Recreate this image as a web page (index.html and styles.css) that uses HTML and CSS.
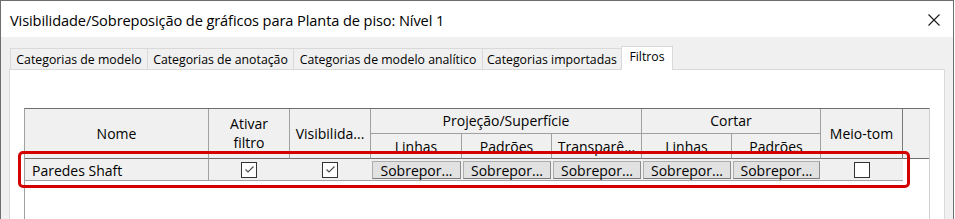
FILE: index.html
```html
<!DOCTYPE html>
<html lang="pt">
<head>
    <meta charset="UTF-8">
    <title>Visibilidade/Sobreposição de gráficos</title>
    <link rel="stylesheet" href="styles.css">
</head>
<body>
    <div class="window">
        <div class="titlebar">
            <span class="title">Visibilidade/Sobreposição de gráficos para Planta de piso: Nível 1</span>
            <svg class="close" width="12" height="12" viewBox="0 0 12 12">
                <path d="M0.5 0.5 L11.5 11.5 M11.5 0.5 L0.5 11.5" stroke="#1a1a1a" stroke-width="1.1" fill="none"/>
            </svg>
        </div>

        <div class="content">
            <div class="tabs">
                <div class="tab t1">Categorias de modelo</div>
                <div class="tab t2">Categorias de anotação</div>
                <div class="tab t3">Categorias de modelo analítico</div>
                <div class="tab t4">Categorias importadas</div>
                <div class="tab t5 active">Filtros</div>
            </div>

            <div class="page">
                <div class="grid">
                    <!-- cabeçalho -->
                    <div class="hd span2">Nome</div>
                    <div class="hd span2 two-line">Ativar<br>filtro</div>
                    <div class="hd span2">Visibilida...</div>
                    <div class="hd group3">Projeção/Superfície</div>
                    <div class="hd group2">Cortar</div>
                    <div class="hd span2 dark-right">Meio-tom</div>
                    <div class="hd span2 filler"></div>
                    <div class="hd sub">Linhas</div>
                    <div class="hd sub">Padrões</div>
                    <div class="hd sub">Transparê...</div>
                    <div class="hd sub">Linhas</div>
                    <div class="hd sub">Padrões</div>

                    <!-- linha do filtro -->
                    <div class="cell name">Paredes Shaft</div>
                    <div class="cell center"><span class="chk"><svg width="13" height="13" viewBox="0 0 13 13"><path d="M2.5 6.5 L5 9 L10.5 3.5" stroke="#4a4a4a" stroke-width="1.1" fill="none"/></svg></span></div>
                    <div class="cell center"><span class="chk"><svg width="13" height="13" viewBox="0 0 13 13"><path d="M2.5 6.5 L5 9 L10.5 3.5" stroke="#4a4a4a" stroke-width="1.1" fill="none"/></svg></span></div>
                    <div class="cell"><button class="btn">Sobrepor...</button></div>
                    <div class="cell"><button class="btn">Sobrepor...</button></div>
                    <div class="cell"><button class="btn">Sobrepor...</button></div>
                    <div class="cell"><button class="btn">Sobrepor...</button></div>
                    <div class="cell"><button class="btn">Sobrepor...</button></div>
                    <div class="cell center"><span class="chk"></span></div>
                    <div class="cell empty"></div>
                </div>
            </div>
        </div>

        <div class="highlight"></div>
    </div>
</body>
</html>
```

FILE: styles.css
```css
body {
    margin: 0;
    background: #fff;
    font-family: "Open Sans", "Noto Sans", "Liberation Sans", sans-serif;
    color: #000;
}
.window {
    position: relative;
    width: 954px;
    height: 219px;
    box-sizing: border-box;
    border: 1px solid #6e6e6e;
    border-bottom: 0;
    background: #f0f0f0;
    overflow: hidden;
}
.titlebar {
    height: 36px;
    background: #fff;
    display: flex;
    align-items: center;
    justify-content: space-between;
    padding-left: 9px;
}
.title {
    font-size: 14.6px;
    letter-spacing: -0.1px;
    margin-top: 1px;
}
.close {
    margin-right: 13px;
    margin-top: 1px;
}
.content {
    padding: 9px 8px 0 8px;
}
.tabs {
    display: flex;
    align-items: flex-end;
    height: 23px;
    padding-left: 1px;
}
.tab {
    box-sizing: border-box;
    height: 21px;
    margin-left: -1px;
    border: 1px solid #d9d9d9;
    border-bottom: 0;
    background: #f0f0f0;
    font-size: 12.3px;
    display: flex;
    align-items: center;
    justify-content: center;
    white-space: nowrap;
}
.tab.t1 { margin-left: 0; width: 138px; }
.tab.t2 { width: 147px; }
.tab.t3 { width: 190px; }
.tab.t4 { width: 140px; }
.tab.t5 { width: 52px; }
.tab.active {
    height: 24px;
    margin-bottom: -1px;
    background: #fff;
    position: relative;
    z-index: 1;
    padding-bottom: 4px;
}
.page {
    background: #fff;
    border: 1px solid #d9d9d9;
    height: 160px;
    padding: 38px 0 0 14px;
}
.grid {
    display: grid;
    grid-template-columns: 184px 81px 81px 91px 90px 90px 90px 89px 82px 26px;
    grid-template-rows: 25px 25px 22px;
    width: 906px;
    height: 130px;
    box-sizing: border-box;
    align-content: start;
    border-top: 1px solid #6e6e6e;
    border-left: 1px solid #a0a0a0;
    border-right: 1px solid #d0d0d0;
}
.hd {
    box-sizing: border-box;
    background: #f0f0f0;
    border-right: 1px solid #a0a0a0;
    border-bottom: 1px solid #a0a0a0;
    display: flex;
    align-items: center;
    justify-content: center;
    text-align: center;
    font-size: 14px;
    line-height: 19px;
    white-space: nowrap;
    overflow: hidden;
}
.hd.span2 {
    grid-row: span 2;
    border-bottom-color: #6e6e6e;
}
.hd.two-line {
    padding-bottom: 2px;
}
.hd.group3 {
    grid-column: span 3;
    padding-bottom: 2px;
}
.hd.group2 {
    grid-column: span 2;
    padding-bottom: 2px;
}
.hd.sub {
    border-bottom-color: #6e6e6e;
    align-items: flex-start;
    padding-top: 3px;
}
.hd.dark-right {
    border-right-color: #7a7a7a;
}
.hd.filler {
    border-right: 0;
}
.cell {
    box-sizing: border-box;
    background: #f0f0f0;
    border-bottom: 1px solid #a0a0a0;
    display: flex;
    align-items: stretch;
    font-size: 14px;
}
.cell.name {
    align-items: center;
    padding-left: 7px;
    padding-top: 2px;
    border-right: 1px solid #a0a0a0;
}
.cell.center {
    align-items: center;
    justify-content: center;
}
.cell.empty {
    background: #fff;
    border-bottom: 0;
}
.btn {
    flex: 1;
    margin: 2px 1px 1px 1px;
    padding: 0;
    box-sizing: border-box;
    border: 1px solid #adadad;
    border-bottom-color: #7a7a7a;
    border-right-color: #8c8c8c;
    background: #e1e1e1;
    font-family: inherit;
    font-size: 14px;
    line-height: 15px;
    color: #000;
    white-space: nowrap;
}
.chk {
    box-sizing: border-box;
    width: 16px;
    height: 16px;
    border: 1px solid #333;
    background: #fff;
    display: flex;
    align-items: center;
    justify-content: center;
    margin-right: 1px;
}
.highlight {
    position: absolute;
    left: 17px;
    top: 150px;
    width: 892px;
    height: 37px;
    box-sizing: border-box;
    border: 3px solid #d40000;
    border-radius: 5px;
}
```
